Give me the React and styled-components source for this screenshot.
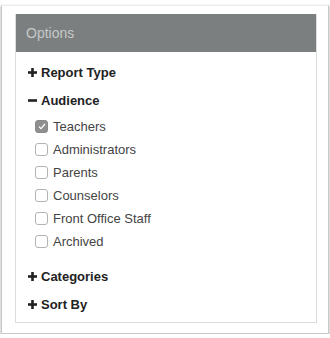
import React, { useState } from 'react';
import styled, { createGlobalStyle } from 'styled-components';

const GlobalStyle = createGlobalStyle`
  body {
    margin: 0;
    background: #fff;
    font-family: "Liberation Sans", Arial, sans-serif;
  }
`;

const Frame = styled.div`
  box-sizing: border-box;
  margin: 5px 0 0 1px;
  width: 328px;
  height: 329px;
  border: 1px solid #c9c9c9;
  border-top-color: #ececec;
  box-shadow: 0 1px 2px rgba(0, 0, 0, 0.4);
  padding: 8px 12px 0 13px;
  background: #fff;
`;

const Panel = styled.div`
  box-sizing: border-box;
  width: 302px;
  border: 1px solid #dcdcdc;
  border-top: none;
`;

const Header = styled.div`
  height: 38px;
  background: #7b7f7f;
  color: #c6c9c9;
  font-size: 14px;
  display: flex;
  align-items: center;
  padding-left: 10px;
`;

const Body = styled.div`
  padding: 6px 0 4px 12px;
  display: flex;
  flex-direction: column;
`;

const SectionTitle = styled.div`
  height: 28px;
  display: flex;
  align-items: center;
  gap: 4px;
  font-size: 13px;
  font-weight: bold;
  color: #222;
  cursor: pointer;
  margin-top: ${(p) => (p.$spaced ? '9px' : '0')};
`;

const List = styled.div`
  display: flex;
  flex-direction: column;
  padding: 1px 0 0 7px;
`;

const Row = styled.label`
  height: 23px;
  display: flex;
  align-items: center;
  gap: 5px;
  font-size: 13px;
  color: #444;
`;

const Box = styled.span`
  box-sizing: border-box;
  width: 13px;
  height: 13px;
  border-radius: 3px;
  border: 1px solid ${(p) => (p.$checked ? '#8a8a8a' : '#b3b3b3')};
  background: ${(p) => (p.$checked ? '#8f8f8f' : '#fff')};
  display: flex;
  align-items: center;
  justify-content: center;
`;

const Sign = ({ open }) => (
  <svg width="9" height="9" viewBox="0 0 9 9">
    <rect x="0" y="3.2" width="9" height="2.6" fill="#222" />
    {!open && <rect x="3.2" y="0" width="2.6" height="9" fill="#222" />}
  </svg>
);

const audience = [
  'Teachers',
  'Administrators',
  'Parents',
  'Counselors',
  'Front Office Staff',
  'Archived',
];

export default function App() {
  const [checked, setChecked] = useState({ Teachers: true });
  const toggle = (name) => setChecked({ ...checked, [name]: !checked[name] });

  return (
    <>
      <GlobalStyle />
      <Frame>
        <Panel>
          <Header>Options</Header>
          <Body>
            <SectionTitle>
              <Sign />
              Report Type
            </SectionTitle>
            <SectionTitle>
              <Sign open />
              Audience
            </SectionTitle>
            <List>
              {audience.map((name) => (
                <Row key={name} onClick={() => toggle(name)}>
                  <Box $checked={checked[name]}>
                    {checked[name] && (
                      <svg width="8" height="7" viewBox="0 0 8 7">
                        <path d="M1 3.6 L3 5.6 L7 1" stroke="#fff" strokeWidth="1.3" fill="none" />
                      </svg>
                    )}
                  </Box>
                  {name}
                </Row>
              ))}
            </List>
            <SectionTitle $spaced>
              <Sign />
              Categories
            </SectionTitle>
            <SectionTitle>
              <Sign />
              Sort By
            </SectionTitle>
          </Body>
        </Panel>
      </Frame>
    </>
  );
}
